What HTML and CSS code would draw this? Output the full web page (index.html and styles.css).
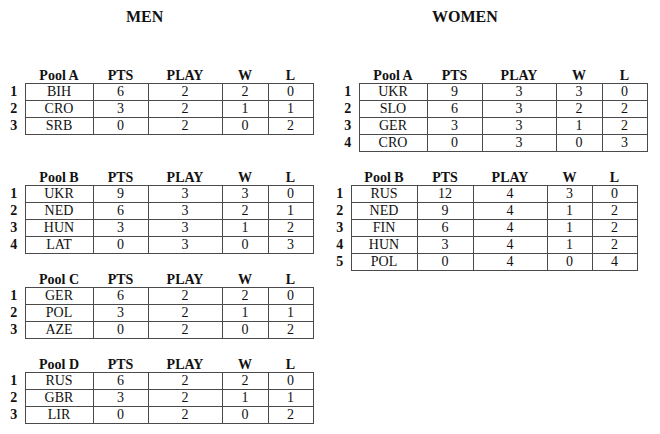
FILE: index.html
```html
<!DOCTYPE html>
<html>
<head>
<meta charset="utf-8">
<link rel="stylesheet" href="styles.css">
</head>
<body>
<div class="page">
  <section class="col men">
    <h1 class="title">MEN</h1>
    <div class="pools">
      <table class="pool">
        <colgroup><col class="c-n"><col class="c-t"><col class="c-p"><col class="c-g"><col class="c-w"><col class="c-l"></colgroup>
        <thead><tr><th></th><th>Pool A</th><th>PTS</th><th>PLAY</th><th>W</th><th>L</th></tr></thead>
        <tbody>
          <tr><th>1</th><td>BIH</td><td>6</td><td>2</td><td>2</td><td>0</td></tr>
          <tr><th>2</th><td>CRO</td><td>3</td><td>2</td><td>1</td><td>1</td></tr>
          <tr><th>3</th><td>SRB</td><td>0</td><td>2</td><td>0</td><td>2</td></tr>
        </tbody>
      </table>
      <table class="pool extra-gap">
        <colgroup><col class="c-n"><col class="c-t"><col class="c-p"><col class="c-g"><col class="c-w"><col class="c-l"></colgroup>
        <thead><tr><th></th><th>Pool B</th><th>PTS</th><th>PLAY</th><th>W</th><th>L</th></tr></thead>
        <tbody>
          <tr><th>1</th><td>UKR</td><td>9</td><td>3</td><td>3</td><td>0</td></tr>
          <tr><th>2</th><td>NED</td><td>6</td><td>3</td><td>2</td><td>1</td></tr>
          <tr><th>3</th><td>HUN</td><td>3</td><td>3</td><td>1</td><td>2</td></tr>
          <tr><th>4</th><td>LAT</td><td>0</td><td>3</td><td>0</td><td>3</td></tr>
        </tbody>
      </table>
      <table class="pool">
        <colgroup><col class="c-n"><col class="c-t"><col class="c-p"><col class="c-g"><col class="c-w"><col class="c-l"></colgroup>
        <thead><tr><th></th><th>Pool C</th><th>PTS</th><th>PLAY</th><th>W</th><th>L</th></tr></thead>
        <tbody>
          <tr><th>1</th><td>GER</td><td>6</td><td>2</td><td>2</td><td>0</td></tr>
          <tr><th>2</th><td>POL</td><td>3</td><td>2</td><td>1</td><td>1</td></tr>
          <tr><th>3</th><td>AZE</td><td>0</td><td>2</td><td>0</td><td>2</td></tr>
        </tbody>
      </table>
      <table class="pool">
        <colgroup><col class="c-n"><col class="c-t"><col class="c-p"><col class="c-g"><col class="c-w"><col class="c-l"></colgroup>
        <thead><tr><th></th><th>Pool D</th><th>PTS</th><th>PLAY</th><th>W</th><th>L</th></tr></thead>
        <tbody>
          <tr><th>1</th><td>RUS</td><td>6</td><td>2</td><td>2</td><td>0</td></tr>
          <tr><th>2</th><td>GBR</td><td>3</td><td>2</td><td>1</td><td>1</td></tr>
          <tr><th>3</th><td>LIR</td><td>0</td><td>2</td><td>0</td><td>2</td></tr>
        </tbody>
      </table>
    </div>
  </section>
  <section class="col women">
    <h1 class="title">WOMEN</h1>
    <div class="pools">
      <table class="pool shift">
        <colgroup><col class="c-n"><col class="c-t"><col class="c-p"><col class="c-g"><col class="c-w"><col class="c-l"></colgroup>
        <thead><tr><th></th><th>Pool A</th><th>PTS</th><th>PLAY</th><th>W</th><th>L</th></tr></thead>
        <tbody>
          <tr><th>1</th><td>UKR</td><td>9</td><td>3</td><td>3</td><td>0</td></tr>
          <tr><th>2</th><td>SLO</td><td>6</td><td>3</td><td>2</td><td>2</td></tr>
          <tr><th>3</th><td>GER</td><td>3</td><td>3</td><td>1</td><td>2</td></tr>
          <tr><th>4</th><td>CRO</td><td>0</td><td>3</td><td>0</td><td>3</td></tr>
        </tbody>
      </table>
      <table class="pool narrow">
        <colgroup><col class="c-n"><col class="c-t"><col class="c-p"><col class="c-g"><col class="c-w"><col class="c-l"></colgroup>
        <thead><tr><th></th><th>Pool B</th><th>PTS</th><th>PLAY</th><th>W</th><th>L</th></tr></thead>
        <tbody>
          <tr><th>1</th><td>RUS</td><td>12</td><td>4</td><td>3</td><td>0</td></tr>
          <tr><th>2</th><td>NED</td><td>9</td><td>4</td><td>1</td><td>2</td></tr>
          <tr><th>3</th><td>FIN</td><td>6</td><td>4</td><td>1</td><td>2</td></tr>
          <tr><th>4</th><td>HUN</td><td>3</td><td>4</td><td>1</td><td>2</td></tr>
          <tr><th>5</th><td>POL</td><td>0</td><td>4</td><td>0</td><td>4</td></tr>
        </tbody>
      </table>
    </div>
  </section>
</div>
</body>
</html>
```
FILE: styles.css
```css
html, body {
  margin: 0;
  padding: 0;
  background: #fff;
}
body {
  font-family: "Liberation Serif", "Times New Roman", serif;
  color: #111;
  width: 660px;
  height: 434px;
  overflow: hidden;
}
.page {
  display: flex;
}
.col {
  display: flex;
  flex-direction: column;
}
.men {
  width: 329px;
}
.women {
  flex: 1;
}
.title {
  margin: 7px 0 0 0;
  font-size: 16px;
  line-height: 20px;
  font-weight: bold;
  color: #111;
}
.men .title {
  padding-left: 126px;
}
.women .title {
  padding-left: 103px;
}
.pools {
  display: flex;
  flex-direction: column;
  align-items: flex-start;
  gap: 16px;
  margin-top: 39px;
}
.pool {
  border-collapse: collapse;
  table-layout: fixed;
  width: 310px;
  font-size: 14px;
  margin-left: 3px;
}
.pool.extra-gap {
  margin-top: 17px;
}
.pool.shift {
  margin-left: 8px;
}
.pool.narrow {
  margin-left: 0;
  width: 308px;
}
.c-n { width: 22px; }
.c-t { width: 68px; }
.c-p { width: 55px; }
.c-g { width: 74px; }
.c-w { width: 46px; }
.c-l { width: 45px; }
.narrow .c-t { width: 66px; }
.narrow .c-p { width: 56px; }
.narrow .c-w { width: 45px; }
.pool th,
.pool td {
  padding: 0;
  height: 16px;
  line-height: 16px;
  text-align: center;
  white-space: nowrap;
}
.pool thead th {
  font-weight: bold;
  vertical-align: bottom;
  line-height: 15px;
  height: 17px;
}
.pool tbody th {
  font-weight: bold;
}
.pool td {
  border: 1px solid #4a4a4a;
  font-weight: normal;
}
```
